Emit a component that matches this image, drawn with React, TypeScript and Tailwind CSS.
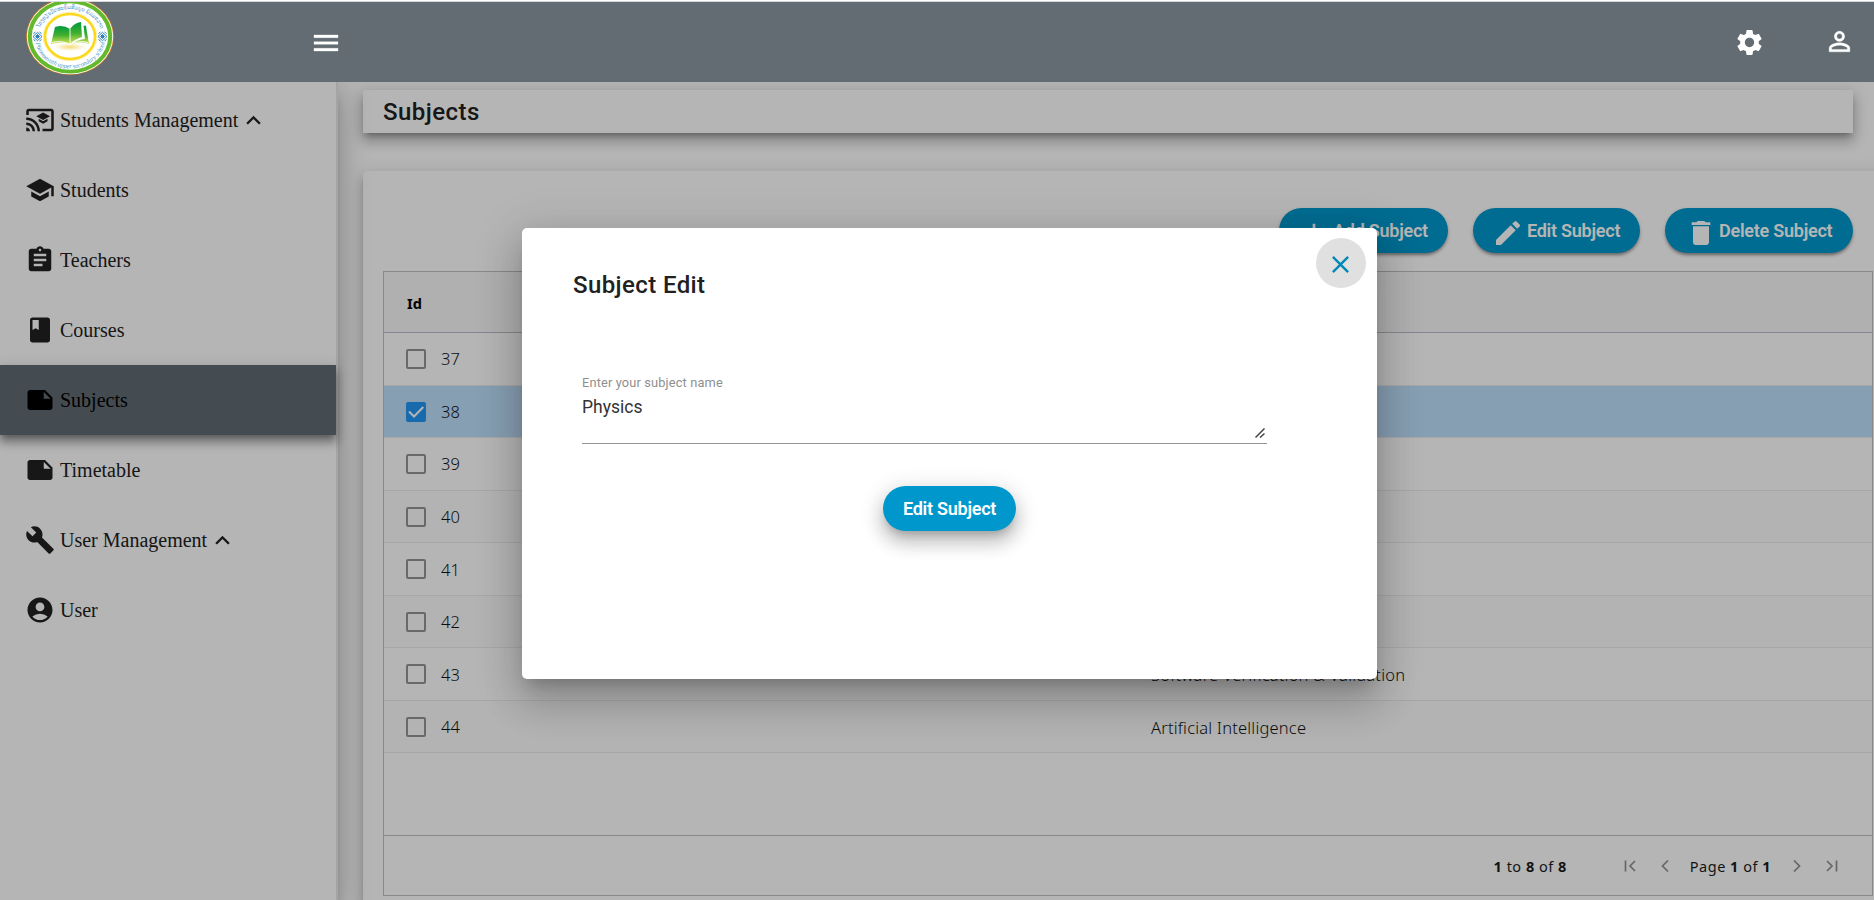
import type { ReactNode } from "react";
import {
  MdCastForEducation,
  MdSchool,
  MdAssignment,
  MdBook,
  MdNote,
  MdBuild,
  MdAccountCircle,
  MdMenu,
  MdSettings,
  MdPermIdentity,
  MdKeyboardArrowUp,
  MdAdd,
  MdEdit,
  MdDelete,
  MdClose,
} from "react-icons/md";

const navItems = [
  { label: "Students Management", Icon: MdCastForEducation, group: true },
  { label: "Students", Icon: MdSchool },
  { label: "Teachers", Icon: MdAssignment },
  { label: "Courses", Icon: MdBook },
  { label: "Subjects", Icon: MdNote, active: true },
  { label: "Timetable", Icon: MdNote },
  { label: "User Management", Icon: MdBuild, group: true },
  { label: "User", Icon: MdAccountCircle },
];

const subjects = [
  { id: 37, name: "" },
  { id: 38, name: "Physics", selected: true },
  { id: 39, name: "" },
  { id: 40, name: "" },
  { id: 41, name: "" },
  { id: 42, name: "" },
  { id: 43, name: "Software Verification & Validation" },
  { id: 44, name: "Artificial Intelligence" },
];

function Ornament({ x }: { x: number }) {
  return (
    <g transform={`translate(${x} 38.5)`} fill="none" stroke="#2f7fbd" strokeWidth="1">
      <path d="M-4.5 0 0-4.2 4.5 0 0 4.2Z" />
      <path d="M-2 0 0-2 2 0 0 2Z" fill="#2f7fbd" />
      <path d="M-4-3-2-4.5M4-3 2-4.5M-4 3-2 4.5M4 3 2 4.5" />
    </g>
  );
}

function Logo() {
  return (
    <svg className="-mt-1 block h-[77px] w-[88px] shrink-0" viewBox="0 0 88 77">
      <defs>
        <linearGradient id="page" x1="0" y1="0" x2="0" y2="1">
          <stop offset="0" stopColor="#009a3e" />
          <stop offset="0.5" stopColor="#3fae2f" />
          <stop offset="1" stopColor="#d8e45a" />
        </linearGradient>
        <radialGradient id="glow">
          <stop offset="0" stopColor="#f6dc7a" />
          <stop offset="1" stopColor="#fff" />
        </radialGradient>
        <path id="arcTop" d="M14 29.500A31.500 26.500 0 0 1 74 29.500" />
        <path id="arcBottom" d="M9.5 45A35 30.500 0 0 0 78.5 45" />
      </defs>
      <ellipse cx="44" cy="38.5" rx="44" ry="38.5" fill="#c8741c" />
      <ellipse cx="44" cy="38.5" rx="43.2" ry="37.8" fill="#fff" />
      <ellipse cx="44" cy="38.5" rx="42.3" ry="37" fill="#62b92c" />
      <ellipse cx="44" cy="38.5" rx="38.2" ry="33.2" fill="#fff" />
      <ellipse cx="44" cy="38.5" rx="25" ry="22.5" fill="#fff" stroke="#fbd81c" strokeWidth="2.6" />
      <ellipse cx="44" cy="38.5" rx="26.8" ry="24.2" fill="none" stroke="#fdeb8a" strokeWidth="0.8" />
      <text className="fill-[#4a98cb] text-[5.500px]" fontFamily="'DejaVu Sans', sans-serif" textLength="76" lengthAdjust="spacingAndGlyphs">
        <textPath href="#arcTop">ໂຮງຮຽນມັດທະຍົມສົມບູນ ພິມມະວາດ</textPath>
      </text>
      <text className="fill-[#4a98cb] text-[6.500px] italic" fontFamily="'Liberation Serif', serif" textLength="93" lengthAdjust="spacingAndGlyphs">
        <textPath href="#arcBottom">Phimmavath upper secondary school</textPath>
      </text>
      <Ornament x={11.5} />
      <Ornament x={76.5} />
      <ellipse cx="44" cy="49" rx="16" ry="4" fill="url(#glow)" />
      <path d="M29 29Q37 26 44 31V46Q36 43 25 46Z" fill="url(#page)" />
      <path d="M44 31Q48 25 55 24L56 39Q49 41 44 46Z" fill="url(#page)" />
      <path d="M57 28Q59 27 60 28L63 46Q53 43 45 46.500Q50 42 58.500 41Z" fill="url(#page)" />
      <path d="M44 31V47M26 44.500Q36 42 44 46.500 52 42 62 44.500M57 27 58.500 41" fill="none" stroke="#fff" strokeWidth="0.9" />
    </svg>
  );
}

function ActionButton({ className, children }: { className: string; children: ReactNode }) {
  return (
    <button
      className={`flex h-[45px] items-center whitespace-nowrap rounded-[22.5px] bg-[#0098cc] text-[18px] font-semibold tracking-[-0.25px] text-white ${className}`}
    >
      {children}
    </button>
  );
}

function Checkbox({ checked }: { checked?: boolean }) {
  return checked ? (
    <span className="flex size-5 items-center justify-center rounded-[2px] bg-[#2196f3]">
      <svg className="size-5" viewBox="0 0 20 20" fill="none" stroke="#fff" strokeWidth="2">
        <path d="m3 9.500 5 5L17.300 5" />
      </svg>
    </span>
  ) : (
    <span className="size-5 rounded-[2px] border-2 border-[#959595]" />
  );
}

function PageArrow({ d, className }: { d: string; className: string }) {
  return (
    <svg className={`h-3 w-3 ${className}`} viewBox="0 0 12 12" fill="none" stroke="#919191" strokeWidth="1.700">
      <path d={d} />
    </svg>
  );
}

export default function App() {
  return (
    <div className="relative flex h-[900px] w-full flex-col overflow-hidden bg-white font-[Roboto,sans-serif] text-[#212121]">
      <header className="relative z-20 h-[82px] shrink-0 border-t border-white bg-[#626c72]">
        <div className="flex h-[81px] items-start overflow-hidden border-t border-[#d5d8da] pl-[26px]">
          <Logo />
          <MdMenu className="ml-[196px] mt-[25px] size-8 stroke-[0.25] text-white [&>path:first-child]:stroke-none" />
          <MdSettings className="ml-auto mt-[25px] size-[31px] text-white" />
          <MdPermIdentity className="ml-[59px] mr-[19px] mt-[24px] size-[31px] stroke-[0.3] text-white [&>path:first-child]:stroke-none" />
        </div>
      </header>

      <div className="flex min-h-0 flex-1">
        <aside className="relative z-10 w-[338px] shrink-0 border-r-2 border-[#e8e8e8] bg-white pt-[3px] font-['Liberation_Serif',serif] text-[20px] shadow-[0_8px_10px_-5px_rgba(0,0,0,.2),0_16px_24px_2px_rgba(0,0,0,.14),0_6px_30px_5px_rgba(0,0,0,.12)]">
          {navItems.map(({ label, Icon, group, active }) => (
            <div
              key={label}
              className={`flex h-[70px] items-center pl-[25px] ${
                active
                  ? "relative bg-[#626c72] text-black shadow-[0_5px_5px_-3px_rgba(0,0,0,.2),0_8px_10px_1px_rgba(0,0,0,.14),0_3px_14px_2px_rgba(0,0,0,.12),0_6px_8px_0px_rgba(0,0,0,.2)]"
                  : ""
              }`}
            >
              <Icon className="size-[30px]" />
              <span className="mb-px ml-[5px]">{label}</span>
              {group && <MdKeyboardArrowUp className="ml-px size-[29px]" />}
            </div>
          ))}
        </aside>

        <main className="min-w-0 flex-1 overflow-hidden pl-[25px] pt-2">
          <h1 className="mr-[21px] flex h-[43px] items-center bg-white pl-5 text-[24px] font-medium tracking-[0.45px] shadow-[0_5px_6px_-3px_rgba(0,0,0,.3),0_9px_12px_1px_rgba(0,0,0,.16),0_3px_16px_2px_rgba(0,0,0,.14)]">
            Subjects
          </h1>

          <section className="mt-[38px] h-[760px] w-[1540px] rounded bg-white pl-5 pt-[37px] shadow-[0_5px_6px_-3px_rgba(0,0,0,.2),0_9px_12px_1px_rgba(0,0,0,.14),0_3px_16px_2px_rgba(0,0,0,.12)]">
            <div className="flex w-[1470px] justify-end gap-[25px]">
              <ActionButton className="w-[169px] pl-[19px] shadow-[0_3px_3px_-1px_rgba(0,0,0,.3),0_2px_4px_rgba(0,0,0,.2)]">
                <MdAdd className="mt-1 size-8" />
                <span className="ml-[3px]">Add Subject</span>
              </ActionButton>
              <ActionButton className="w-[167px] pl-[19px] shadow-[0_3px_3px_-1px_rgba(0,0,0,.3),0_2px_4px_rgba(0,0,0,.2)]">
                <MdEdit className="mt-[5px] size-8" />
                <span className="ml-[3px]">Edit Subject</span>
              </ActionButton>
              <ActionButton className="w-[188px] pl-[20px] shadow-[0_3px_3px_-1px_rgba(0,0,0,.3),0_2px_4px_rgba(0,0,0,.2)]">
                <MdDelete className="mt-[5px] size-8" />
                <span className="ml-[2px]">Delete Subject</span>
              </ActionButton>
            </div>

            <div className="mt-[18px] flex h-[625px] w-[1490px] flex-col border border-[#bdc3c7] font-['Noto_Sans',sans-serif] text-[16px] text-[#181d1f]">
              <div className="flex h-[61px] shrink-0 items-center border-b border-[#babfc7] bg-[#f8f8f8] pl-[23px] text-[14.500px] font-bold text-black">
                <span className="mt-[3px]">Id</span>
              </div>
              <div className="flex-1">
                {subjects.map(({ id, name, selected }) => (
                  <div
                    key={id}
                    className={`flex h-[52.540px] items-center border-b border-[#ececec] pl-[22px] pt-px text-[16.500px] font-[350] text-[#101415] ${
                      selected ? "bg-[#bfe0fd]" : id % 2 ? "bg-white" : "bg-[#fcfcfc]"
                    }`}
                  >
                    <Checkbox checked={selected} />
                    <span className="ml-[15px] w-[710px] pt-px">{id}</span>
                    <span className="pt-0.5 tracking-[0.2px]">{name}</span>
                  </div>
                ))}
              </div>
              <div className="flex h-[60px] shrink-0 items-center border-t border-[#bdc3c7] pr-[34px] text-[14.500px] tracking-[0.5px]">
                <span className="ml-auto mt-0.5">
                  <b>1</b> to <b>8</b> of <b>8</b>
                </span>
                <PageArrow className="ml-[57px]" d="M1.500.5v11M11 1 6 6l5 5" />
                <PageArrow className="ml-[23px]" d="M9 .5 3.500 6 9 11.500" />
                <span className="ml-[19px] mt-0.5">
                  Page <b>1</b> of <b>1</b>
                </span>
                <PageArrow className="ml-[20px]" d="M3 .5 8.500 6 3 11.500" />
                <PageArrow className="ml-[23px]" d="M10.500.5v11M1 1l5 5-5 5" />
              </div>
            </div>
          </section>
        </main>
      </div>

      <div className="absolute inset-0 z-10 bg-black/29" />
      <div
        role="dialog"
        className="absolute left-[522px] top-[228px] z-30 h-[451px] w-[855px] rounded-[5px] bg-white shadow-[0_11px_15px_-7px_rgba(0,0,0,.2),0_24px_38px_3px_rgba(0,0,0,.14),0_9px_46px_8px_rgba(0,0,0,.12)]"
      >
        <button className="absolute right-[11px] top-[10px] flex size-[50px] items-center justify-center rounded-full bg-[#e0e0e0] text-[#0088b7]">
          <MdClose className="mr-px mt-0.5 size-[29px]" />
        </button>
        <h2 className="pl-[51px] pt-[39px] text-[24px] font-medium leading-9 tracking-[0.4px]">Subject Edit</h2>
        <div className="ml-[60px] mt-[70px] flex h-[71px] w-[685px] flex-col border-b border-[#949494]">
          <label className="text-[12.800px] leading-[20px] tracking-[0.15px] text-[#8f8f8f]">Enter your subject name</label>
          <div className="flex flex-1 items-start justify-between">
            <span className="pt-px text-[17.500px] leading-[26px] text-[#333]">Physics</span>
            <svg className="mr-[2px] mt-[35px] size-[10px] self-start" viewBox="0 0 10 10" fill="none" stroke="#444" strokeWidth="1.500">
              <path d="M.5 9.500 9.500.5M5 9.500 9.500 5.500" />
            </svg>
          </div>
        </div>
        <div className="mt-[42px] flex justify-center">
          <ActionButton className="w-[133px] justify-center shadow-[0_7px_8px_-4px_rgba(0,0,0,.2),0_12px_17px_2px_rgba(0,0,0,.14),0_5px_22px_4px_rgba(0,0,0,.12)]">
            Edit Subject
          </ActionButton>
        </div>
      </div>
    </div>
  );
}
